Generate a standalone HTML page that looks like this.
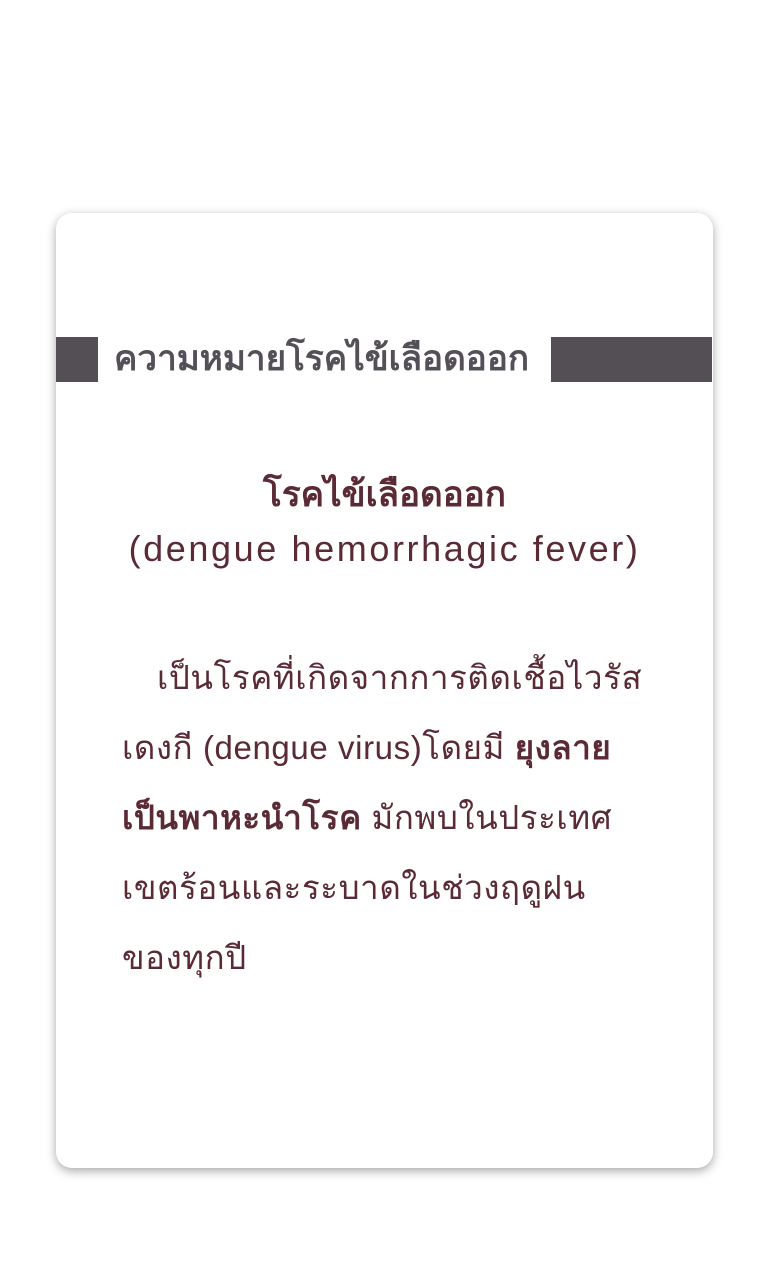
<!DOCTYPE html>
<html><head><meta charset="utf-8">
<style>
html,body{margin:0;padding:0;background:#fff;}
body{width:768px;height:1280px;position:relative;overflow:hidden;font-family:"Liberation Sans","DejaVu Sans",sans-serif;}
.card{position:absolute;left:56px;top:213px;width:657px;height:955px;background:#fff;border-radius:16px;box-shadow:0 3px 10px rgba(0,0,0,0.35);}
.bl{position:absolute;left:56px;top:337px;width:42px;height:45px;background:#544e55;}
.br{position:absolute;left:551px;top:337px;width:161px;height:45px;background:#544e55;}
.ht{position:absolute;left:114px;top:334px;font-size:35px;font-weight:bold;color:#555058;line-height:50px;white-space:nowrap;}
.t2{position:absolute;left:56px;width:657px;text-align:center;color:#5a2a35;line-height:54px;top:468px;white-space:nowrap;}
.t2 .a{font-size:35px;font-weight:bold;display:block;}
.t2 .e{font-size:36px;letter-spacing:2.6px;display:block;}
.body{position:absolute;left:122px;top:643px;width:560px;color:#5a2a35;font-size:33px;line-height:70px;letter-spacing:0.6px;}
.body p{margin:0;white-space:nowrap;}
</style></head><body>
<div class="card"></div>
<div class="bl"></div><div class="br"></div>
<div class="ht">ความหมายโรคไข้เลือดออก</div>
<div class="t2"><span class="a">โรคไข้เลือดออก</span><span class="e">(dengue hemorrhagic fever)</span></div>
<div class="body">
<p><span style="display:inline-block;width:35px"></span>เป็นโรคที่เกิดจากการติดเชื้อไวรัส</p>
<p>เดงกี (dengue virus)โดยมี <b>ยุงลาย</b></p>
<p><b>เป็นพาหะนำโรค</b> มักพบในประเทศ</p>
<p>เขตร้อนและระบาดในช่วงฤดูฝน</p>
<p>ของทุกปี</p>
</div>
</body></html>
